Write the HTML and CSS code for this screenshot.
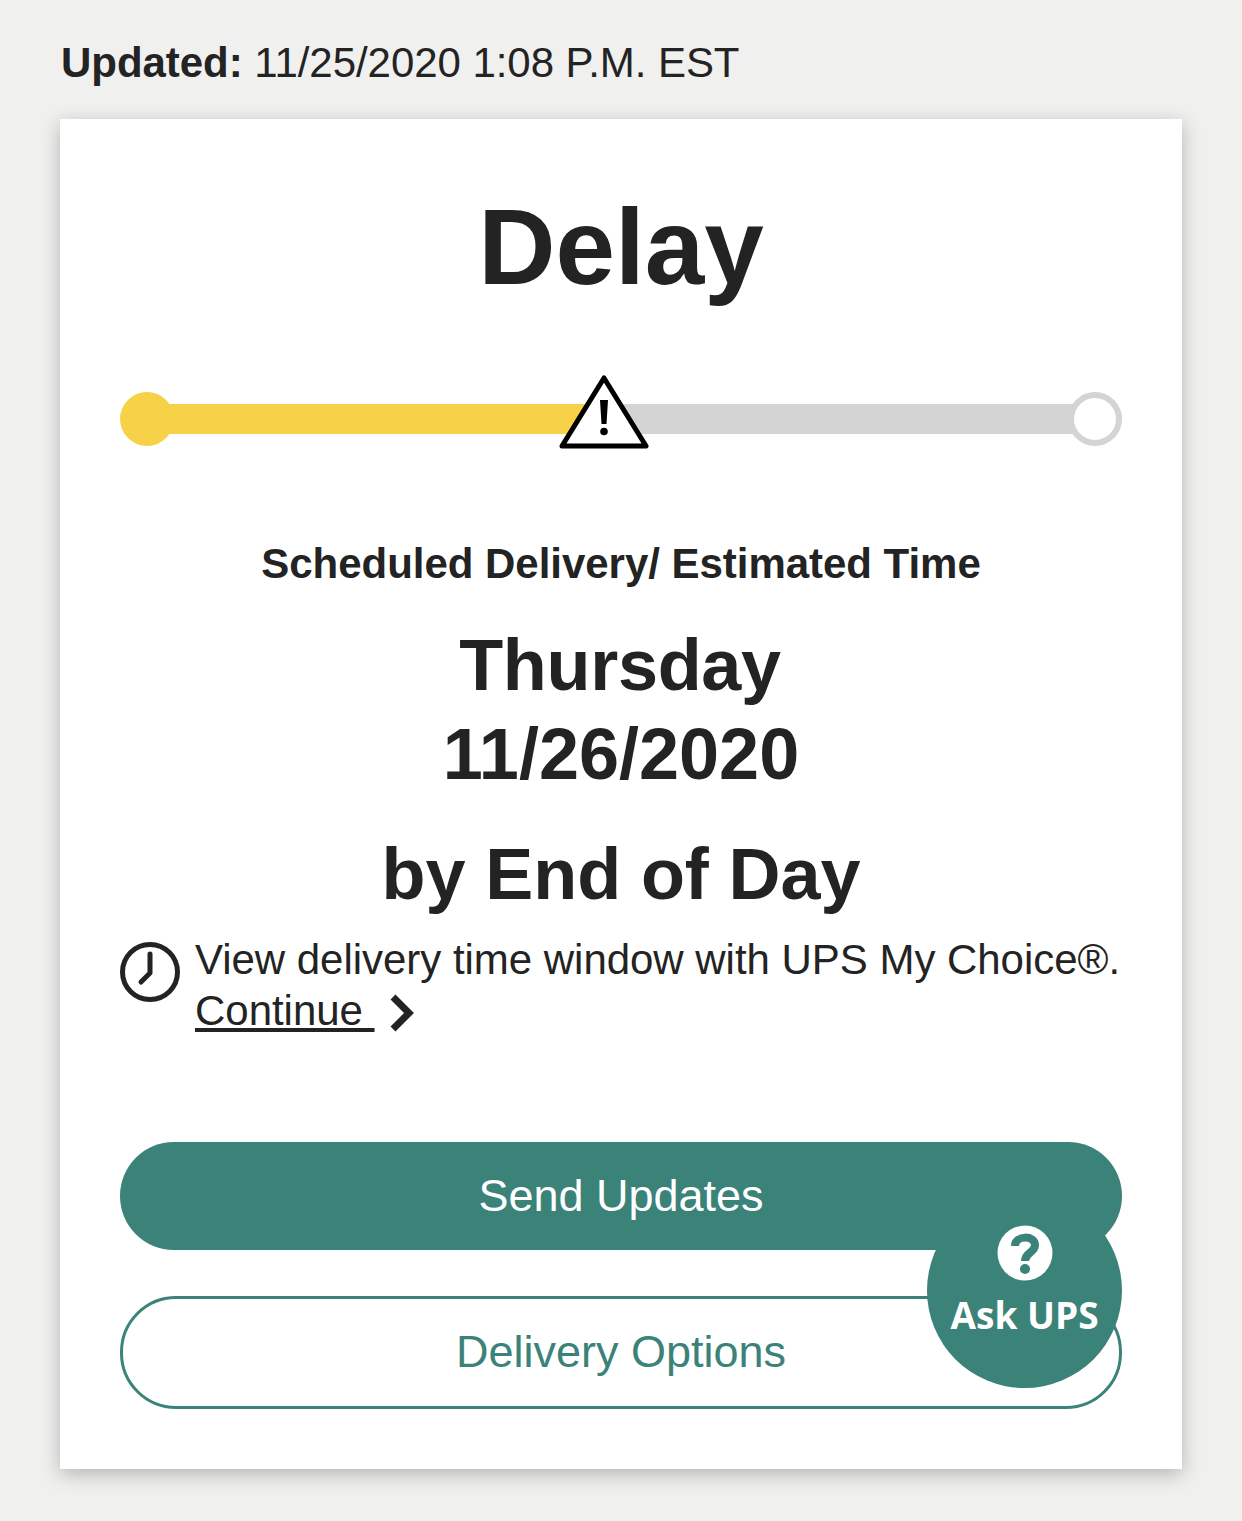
FILE: index.html
```html
<!DOCTYPE html>
<html lang="en">
<head>
    <meta charset="UTF-8">
    <title>Delay</title>
    <link rel="stylesheet" href="styles.css">
</head>
<body>
    <p class="updated"><strong>Updated:</strong> 11/25/2020 1:08 P.M. EST</p>
    <div class="card">
        <h1>Delay</h1>
        <div class="progress">
            <div class="track">
                <div class="track-done"></div>
                <div class="track-left"></div>
            </div>
            <div class="dot-start"></div>
            <div class="dot-end"></div>
            <svg class="warning" width="90" height="74" viewBox="0 0 90 74">
                <path d="M45 3 L87 71 L3 71 Z" fill="#fff" stroke="#000" stroke-width="5" stroke-linejoin="round"/>
                <path d="M41 25 L49 25 L47.5 49 L42.5 49 Z" fill="#000"/>
                <circle cx="45" cy="56.5" r="3.8" fill="#000"/>
            </svg>
        </div>
        <h2 class="sched-label">Scheduled Delivery/ Estimated Time</h2>
        <div class="sched-date"><span class="day">Thursday</span><br>11/26/2020</div>
        <div class="sched-time">by End of Day</div>
        <div class="choice">
            <svg class="clock" width="60" height="60" viewBox="0 0 60 60">
                <circle cx="30" cy="30" r="27.5" fill="none" stroke="#232323" stroke-width="5"/>
                <path d="M30 12 L30 31 L21 40" fill="none" stroke="#232323" stroke-width="5" stroke-linecap="round" stroke-linejoin="round"/>
            </svg>
            <p>View delivery time window with UPS My Choice®.<br>
                <a href="#">Continue&nbsp;</a>
                <svg class="chevron" width="26" height="38" viewBox="0 0 26 38">
                    <path d="M4 3 L20 19 L4 35" fill="none" stroke="#232323" stroke-width="7"/>
                </svg>
            </p>
        </div>
        <div class="buttons">
            <button class="btn btn-fill">Send Updates</button>
            <button class="btn btn-line">Delivery Options</button>
            <div class="ask">
                <svg width="56" height="56" viewBox="0 0 56 56">
                    <circle cx="28" cy="28" r="27.5" fill="#fff"/>
                    <path d="M18 21 C18 10 38 10 38 20 C38 28 28 27 28 36" fill="none" stroke="#3b8279" stroke-width="8"/>
                    <circle cx="28" cy="44" r="5" fill="#3b8279"/>
                </svg>
                <span>Ask UPS</span>
            </div>
        </div>
    </div>
</body>
</html>
```

FILE: styles.css
```css
body {
    margin: 0;
    background-color: #f0f0ef;
    font-family: "Liberation Sans", Arial, sans-serif;
    color: #232323;
    padding: 0 60px 52px;
}
.updated {
    margin: 0;
    padding-top: 39px;
    height: 119px;
    box-sizing: border-box;
    font-size: 42px;
    line-height: 48px;
    letter-spacing: -0.05px;
    padding-left: 1px;
}
.card {
    background-color: #fff;
    height: 1350px;
    box-sizing: border-box;
    padding: 0 60px;
    box-shadow: 0 5px 18px rgba(0,0,0,0.25);
    display: flex;
    flex-direction: column;
}
h1 {
    margin: 0;
    padding-top: 67px;
    font-size: 107px;
    line-height: 122px;
    text-align: center;
}
.progress {
    position: relative;
    height: 54px;
    margin-top: 84px;
}
.track {
    display: flex;
    height: 30px;
    padding-top: 12px;
    margin: 0 27px;
}
.track-done {
    width: 450px;
    background-color: #f7d147;
}
.track-left {
    flex: 1;
    background-color: #d4d4d4;
}
.dot-start, .dot-end {
    position: absolute;
    top: 0;
    width: 54px;
    height: 54px;
    border-radius: 50%;
    box-sizing: border-box;
}
.dot-start {
    left: 0;
    background-color: #f7d147;
}
.dot-end {
    right: 0;
    background-color: #fff;
    border: 6px solid #d4d4d4;
}
.warning {
    position: absolute;
    left: 439px;
    top: -17px;
}
.sched-label {
    margin: 94px 0 0;
    font-size: 42px;
    line-height: 48px;
    letter-spacing: -0.03px;
    text-align: center;
}
.sched-date {
    margin-top: 33px;
    font-size: 72px;
    line-height: 89px;
    font-weight: bold;
    text-align: center;
}
.day {
    letter-spacing: -0.3px;
    margin-left: -2px;
}
.sched-time {
    margin-top: 31px;
    font-size: 72px;
    line-height: 89px;
    font-weight: bold;
    letter-spacing: -0.1px;
    text-align: center;
}
.choice {
    display: flex;
    gap: 15px;
    margin-top: 15px;
}
.clock {
    margin-top: 8px;
    flex-shrink: 0;
}
.choice p {
    margin: 0;
    font-size: 42px;
    line-height: 51px;
    letter-spacing: -0.03px;
    white-space: nowrap;
}
.choice a {
    color: #232323;
}
.chevron {
    margin-left: 3px;
    vertical-align: -7px;
}
.buttons {
    position: relative;
    margin-top: 106px;
    display: flex;
    flex-direction: column;
    gap: 46px;
}
.btn {
    width: 100%;
    border-radius: 56px;
    font-family: inherit;
    font-size: 45px;
    cursor: pointer;
}
.btn-fill {
    height: 108px;
    padding: 0;
    background-color: #3b8279;
    border: none;
    color: #fff;
}
.btn-line {
    height: 113px;
    padding: 0 0 1px;
    background-color: #fff;
    border: 3px solid #3b8279;
    color: #3b8279;
}
.ask {
    position: absolute;
    right: 0;
    top: 51px;
    width: 195px;
    height: 195px;
    border-radius: 50%;
    background-color: #3b8279;
    color: #fff;
    display: flex;
    flex-direction: column;
    align-items: center;
    padding-top: 32px;
    box-sizing: border-box;
}
.ask span {
    font-family: "Open Sans", sans-serif;
    font-weight: bold;
    font-size: 37px;
    line-height: 48px;
    margin-top: 10px;
    white-space: nowrap;
}
```
